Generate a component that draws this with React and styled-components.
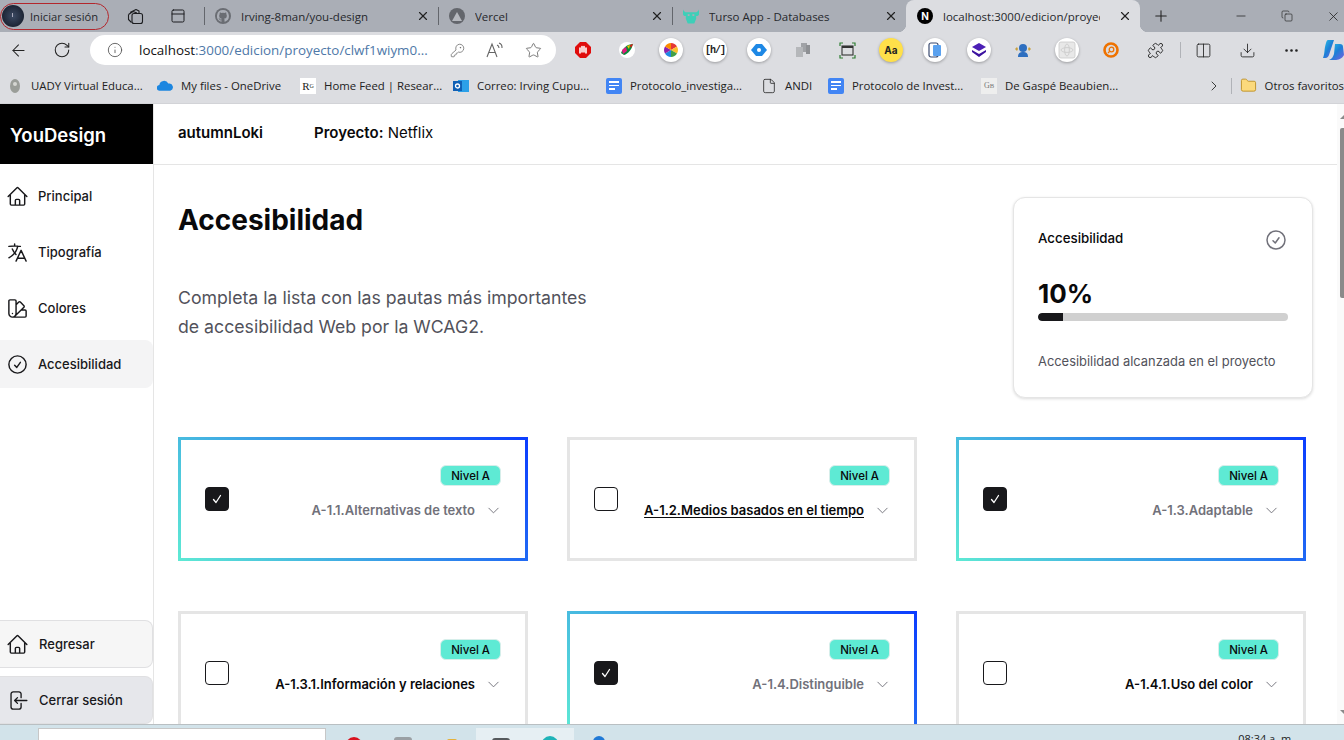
import React from "react";
import styled, { createGlobalStyle } from "styled-components";
import { HiOutlineHome, HiOutlineLanguage, HiOutlineSwatch, HiOutlineCheckCircle, HiOutlineChevronDown } from "react-icons/hi2";
import { ArrowLeft, RotateCw, Info, KeyRound, Star, X, Plus, Minus, Copy, ChevronRight, Download, MoreHorizontal, Puzzle, Columns2, File, Folder, PanelTop } from "lucide-react";

const Global = createGlobalStyle`
  html, body { margin: 0; padding: 0; width: 1344px; height: 740px; overflow: hidden; background: #fff; }
  body { font-family: Inter, "Liberation Sans", sans-serif; color: #09090b; }
  * { box-sizing: border-box; }
`;

const Screen = styled.div`display: flex; flex-direction: column; width: 1344px; height: 740px; overflow: hidden;`;

const TabBar = styled.div`display: flex; align-items: center; height: 32px; flex: none; background: #aaaeb6; font-family: "Open Sans", "Noto Sans", sans-serif; font-size: 11.5px; color: #26282c;`;
const Profile = styled.div`display: flex; align-items: center; gap: 6px; width: 109px; height: 27px; padding-left: 1px; border: 1px solid #b3272d; border-radius: 14px; flex: none; white-space: nowrap; font-size: 11.2px;`;
const Avatar = styled.span`
  width: 22px; height: 22px; border-radius: 50%; background: radial-gradient(circle at 50% 50%, #3c4a63, #0e1420); flex: none; position: relative;
  &::after { content: ""; position: absolute; left: 10px; top: 8px; width: 1px; height: 4px; background: #aab; }
`;
const TabTools = styled.div`display: flex; align-items: center; flex: none; width: 95px; padding-left: 18px; gap: 26px; color: #1c1d20;`;
const Tab = styled.div`
  display: flex; align-items: center; flex: none; height: 32px; width: 234px; padding-left: 11px; gap: 10px; white-space: nowrap; position: relative;
  &::before { content: ""; position: absolute; left: 0; top: 7px; width: 1px; height: 18px; background: #63666c; }
`;
const ActiveTab = styled.div`
  display: flex; align-items: center; flex: none; width: 234px; height: 32px; padding-left: 11px; gap: 10px; background: #dcdde1; border-radius: 8px 8px 0 0; white-space: nowrap; position: relative;
  &::before, &::after { content: ""; position: absolute; bottom: 0; width: 8px; height: 8px; background: radial-gradient(circle at 0 0, transparent 8px, #dcdde1 8.5px); }
  &::before { left: -8px; }
  &::after { right: -8px; transform: scaleX(-1); }
`;
const TabTitle = styled.span`flex: 1; min-width: 0; overflow: hidden;`;
const TabClose = styled.span`display: flex; flex: none; width: 30px; justify-content: center; color: #222;`;
const NextBadge = styled.span`width: 16px; height: 16px; border-radius: 50%; background: #000; color: #fff; font-size: 10px; font-weight: 700; display: flex; align-items: center; justify-content: center; flex: none; font-family: Inter, sans-serif;`;
const NewTab = styled.div`display: flex; flex: none; width: 41px; padding-left: 12px; color: #222;`;
const WindowControls = styled.div`display: flex; flex: 1; justify-content: flex-end; align-items: center; gap: 33px; padding-right: 3px; color: #222;`;

const ToolBar = styled.div`display: flex; align-items: center; height: 36px; flex: none; background: #dcdde1; padding-left: 9px; color: #222;`;
const NavBtn = styled.span`display: flex; flex: none; width: ${p => p.$w}px;`;
const Omnibox = styled.div`display: flex; align-items: center; width: 466px; height: 30px; padding: 0 14px 0 17px; flex: none; background: #fff; border-radius: 15px; font-family: "Open Sans", "Noto Sans", sans-serif; font-size: 13.4px; color: #4e78a8;`;
const Host = styled.span`color: #111;`;
const Url = styled.span`flex: 1; margin-left: 16px; white-space: nowrap; overflow: hidden;`;
const OmniIcons = styled.div`display: flex; gap: 21px; align-items: center; color: #666;`;
const Ext = styled.div`display: flex; align-items: center; margin-left: 5px; flex: none;`;
const ExtSlot = styled.span`display: flex; align-items: center; justify-content: center; width: 44px; height: 28px; flex: none;`;
const ExtCircle = styled.span`display: flex; align-items: center; justify-content: center; width: 24px; height: 24px; border-radius: 50%; background: ${p => p.$bg ?? "#fff"}; box-shadow: 0 1px 3px rgba(0,0,0,.3); font-size: 10px; font-weight: 700; color: #222; overflow: hidden;`;
const MonoMark = styled.span`font-family: "Liberation Mono", monospace; font-size: 10px; font-weight: 700; letter-spacing: -1px;`;
const Divider = styled.span`width: 1px; height: 16px; background: #b0b2b7; flex: none; margin-left: ${p => p.$ml ?? 0}px;`;
const RightTools = styled.div`display: flex; align-items: center; flex: none; color: #222;`;
const Copilot = styled.span`display: flex; width: 22px; margin-left: 9px; flex: none;`;

const BookmarkBar = styled.div`display: flex; align-items: center; height: 36px; flex: none; background: #dcdde1; font-family: "Open Sans", "Noto Sans", sans-serif; font-size: 11.4px; color: #222; padding-left: 7px; white-space: nowrap; border-bottom: 1px solid #d2d3d7;`;
const Bookmark = styled.span`display: flex; align-items: center; gap: 8px; flex: none; width: ${p => p.$w}px;`;
const BookmarkEnd = styled.div`display: flex; align-items: center; flex: 1; justify-content: flex-end; gap: 8px; overflow: hidden;`;
const FavIcon = styled.span`display: flex; flex: none; width: 16px; height: 16px; align-items: center; justify-content: center;`;
const GDoc = styled.span`display: flex; flex-direction: column; justify-content: center; gap: 2px; padding: 0 3px; width: 16px; height: 16px; border-radius: 2px; background: #4285f4; flex: none;`;
const GDocLine = styled.i`display: block; height: 1.5px; background: #fff; width: ${p => p.$w ?? 100}%;`;
const SmallLogo = styled.span`width: 16px; height: 16px; background: ${p => p.$bg ?? "#fff"}; font-family: "Liberation Serif", serif; font-size: ${p => p.$s ?? 11}px; display: flex; align-items: center; justify-content: center; color: ${p => p.$c ?? "#222"}; flex: none;`;
const TinySup = styled.sup`font-size: 6px;`;

const Page = styled.div`display: flex; flex: 1; min-height: 0; background: #fff; position: relative;`;
const Sidebar = styled.aside`display: flex; flex-direction: column; width: 154px; flex: none; border-right: 1px solid #e5e5e5;`;
const Brand = styled.div`display: flex; align-items: center; height: 60px; width: 153px; padding: 2px 0 0 10px; flex: none; background: #000; color: #fff; font-size: 18.5px; font-weight: 600;`;
const Nav = styled.nav`display: flex; flex-direction: column; gap: 8px; padding-top: 8px; flex: 1;`;
const NavItem = styled.div`display: flex; align-items: center; gap: 9px; height: 48px; padding-left: 6px; font-size: 13px; font-weight: 500; color: #18181b; border-radius: 0 8px 8px 0; background: ${p => (p.$active ? "#f4f4f5" : "transparent")};`;
const SideFoot = styled.div`display: flex; flex-direction: column; gap: 8px; flex: none;`;
const FootBtn = styled.div`display: flex; align-items: center; gap: 10px; height: 48px; padding-left: 6px; font-size: 13px; font-weight: 500; color: #18181b; border: 1px solid #e0e0e2; border-left: none; border-radius: 0 8px 8px 0; background: ${p => p.$bg};`;

const Main = styled.main`flex: 1; min-width: 0; display: flex; flex-direction: column; overflow: hidden;`;
const Header = styled.header`display: flex; align-items: center; gap: 51px; height: 61px; flex: none; padding: 0 0 4px 24px; border-bottom: 1px solid #e5e5e5; font-size: 15px;`;
const UserName = styled.span`font-weight: 600;`;
const ProjectLabel = styled.span`font-weight: 600;`;
const Content = styled.div`flex: 1; padding: 32px 31px 0 24px; overflow: hidden;`;
const Intro = styled.div`display: flex; justify-content: space-between; align-items: flex-start;`;
const Title = styled.h1`margin: 5px 0 0; font-size: 28px; line-height: 36px; font-weight: 700; color: #09090b;`;
const Lead = styled.p`margin: 45px 0 0; font-size: 17.7px; line-height: 29px; font-weight: 400; color: #52525b; width: 420px;`;
const StatCard = styled.section`width: 300px; height: 201px; padding: 30px 24px 0; flex: none; background: #fff; border: 1px solid #e5e5e5; border-radius: 12px; box-shadow: 0 1px 3px rgba(0,0,0,.14);`;
const StatHead = styled.div`display: flex; justify-content: space-between; align-items: flex-start; font-size: 13.3px; font-weight: 500; line-height: 20px; color: #09090b;`;
const StatIcon = styled.span`display: flex; color: #71717a;`;
const Percent = styled.div`margin-top: 26px; font-size: 26px; line-height: 32px; font-weight: 700;`;
const Track = styled.div`height: 8px; margin-top: 3px; border-radius: 4px; background: #d0d0d0; overflow: hidden;`;
const Fill = styled.div`height: 100%; background: #18181b; border-radius: 4px 0 0 4px;`;
const StatNote = styled.p`margin: 33px 0 0; font-size: 12.9px; line-height: 16px; color: #52525b;`;

const Grid = styled.div`display: grid; grid-template-columns: repeat(3, 350px); column-gap: 39px; row-gap: 50px; margin-top: 39px;`;
const Card = styled.article`
  display: flex; align-items: center; justify-content: space-between; height: 124px; padding: 0 24px;
  border: 3px solid transparent;
  background: ${p => p.$on
    ? "linear-gradient(#fff, #fff) padding-box, linear-gradient(45deg, #5eead4, #0b3cff) border-box"
    : "linear-gradient(#fff, #fff) padding-box, linear-gradient(#e5e5e5, #e5e5e5) border-box"};
`;
const Box = styled.span`display: flex; align-items: center; justify-content: center; width: 24px; height: 24px; flex: none; border-radius: 4px; border: 1px solid #18181b; background: ${p => (p.$on ? "#18181b" : "#fff")}; color: #fff;`;
const CardSide = styled.div`display: flex; flex-direction: column; align-items: flex-end; gap: 14px; margin-bottom: 13px;`;
const Badge = styled.span`display: flex; align-items: center; height: 21px; padding: 0 10px; border-radius: 6px; background: #5eead4; font-size: 11.5px; font-weight: 500; color: #09090b; border: 1px solid #d6eeea;`;
const Rule = styled.div`display: flex; align-items: center; gap: 11px; font-size: 13px; font-weight: 600; line-height: 20px;`;
const RuleText = styled.span`color: ${p => (p.$on ? "#71717a" : "#09090b")}; text-decoration: ${p => (p.$u ? "underline" : "none")}; text-underline-offset: 2px;`;
const Chevron = styled.span`display: flex; color: #71717a; width: 15px;`;

const Scrollbar = styled.div`position: absolute; top: 0; right: 0; bottom: 0; width: 7px; background: #fafafa;`;
const Thumb = styled.div`position: absolute; top: 24px; left: 3px; right: 0; height: 170px; background: #8a8a8a; border-radius: 2px 0 0 2px;`;
const ArrowUp = styled.span`position: absolute; top: 11px; right: 0; border-left: 4px solid transparent; border-bottom: 4px solid #8a8a8a;`;
const ArrowDown = styled.span`position: absolute; bottom: 10px; right: 0; border-left: 4px solid transparent; border-top: 4px solid #8a8a8a;`;

const Taskbar = styled.footer`display: flex; align-items: flex-start; height: 16px; flex: none; background: #d2e3ea; border-top: 1px solid #b9bfc2; overflow: hidden;`;
const SearchBox = styled.div`width: 288px; height: 20px; margin: 3px 0 0 38px; background: #fff; border: 1px solid #c7c7c7; flex: none;`;
const TaskIcons = styled.div`display: flex; align-items: flex-start; margin-left: 3px; flex: none;`;
const TaskSlot = styled.span`display: flex; justify-content: center; width: 49px; height: 20px; margin-top: 3px; padding-top: ${p => p.$top}px; background: ${p => p.$bg ?? "transparent"};`;
const TaskDot = styled.span`width: ${p => p.$s ?? 18}px; height: 20px; flex: none; border-radius: ${p => p.$r ?? "50%"}; background: ${p => p.$c};`;
const Clock = styled.span`margin-left: auto; margin-right: 50px; margin-top: 7px; font-family: "Open Sans", sans-serif; font-size: 11px; line-height: 14px; color: #222; white-space: nowrap;`;

const TabIconCircle = styled.span`display: flex; align-items: center; justify-content: center; width: 16px; height: 16px; border-radius: 50%; background: ${p => p.$bg}; flex: none;`;

const items = [
  ["A-1.1.Alternativas de texto", true],
  ["A-1.2.Medios basados en el tiempo", false, true],
  ["A-1.3.Adaptable", true],
  ["A-1.3.1.Información y relaciones", false],
  ["A-1.4.Distinguible", true],
  ["A-1.4.1.Uso del color", false],
];

const LogoutIcon = () => (
  <svg width="23" height="23" viewBox="0 0 24 24" fill="none" stroke="currentColor" strokeWidth="1.400" strokeLinecap="round" strokeLinejoin="round">
    <path d="M15.750 9V5.250A2.250 2.250 0 0 0 13.500 3h-6a2.250 2.250 0 0 0-2.250 2.250v13.500A2.250 2.250 0 0 0 7.500 21h6a2.250 2.250 0 0 0 2.250-2.250V15M12 9l-3 3m0 0 3 3m-3-3h12.750" />
  </svg>
);

const CollectionsIcon = () => (
  <svg width="17" height="17" viewBox="0 0 17 17" fill="none" stroke="currentColor" strokeWidth="1.100" strokeLinejoin="round">
    <path d="M3 4.500l6-3 3 1.500v2" />
    <path d="M1.500 6.500L6 3.500 10 5" />
    <path d="M1.500 6.500v5l3 3" />
    <rect x="5" y="5.500" width="10.500" height="10" rx="2" />
  </svg>
);

const CheckMark = () => (
  <svg width="10" height="10" viewBox="0 0 10 10" fill="none" stroke="currentColor" strokeWidth="1.300" strokeLinecap="round" strokeLinejoin="round">
    <path d="M1.500 5.500L4 8.500 8.500 1.500" />
  </svg>
);

export default function App() {
  return (
    <Screen>
      <Global />
      <TabBar>
        <Profile><Avatar />Iniciar sesión</Profile>
        <TabTools>
          <CollectionsIcon />
          <PanelTop size={16} strokeWidth={1.5} />
        </TabTools>
        <Tab>
          <TabIconCircle $bg="#6a6d73">
            <svg width="12" height="12" viewBox="0 0 16 16" fill="#aaaeb6"><path d="M8 0a8 8 0 0 0-2.500 15.600c.4.1.5-.2.5-.4v-1.400c-2.200.5-2.700-1-2.700-1-.4-.9-.9-1.200-.9-1.200-.7-.5.1-.5.1-.5.8.1 1.200.8 1.200.8.7 1.200 1.900.9 2.300.7.1-.5.3-.9.5-1.100-1.800-.2-3.600-.9-3.600-4 0-.9.3-1.600.8-2.100-.1-.2-.4-1 .1-2.100 0 0 .7-.2 2.200.8a7.600 7.600 0 0 1 4 0c1.500-1 2.200-.8 2.200-.8.4 1.100.2 1.900.1 2.100.5.6.8 1.300.8 2.100 0 3.100-1.900 3.700-3.700 3.900.3.3.6.8.6 1.500v2.200c0 .2.1.5.6.4A8 8 0 0 0 8 0z" /></svg>
          </TabIconCircle>
          <TabTitle>Irving-8man/you-design</TabTitle>
          <TabClose><X size={14} /></TabClose>
        </Tab>
        <Tab>
          <TabIconCircle $bg="#63666c">
            <svg width="10" height="9" viewBox="0 0 10 9" fill="#b5b8be"><path d="M5 0l5 9H0z" /></svg>
          </TabIconCircle>
          <TabTitle>Vercel</TabTitle>
          <TabClose><X size={14} /></TabClose>
        </Tab>
        <Tab>
          <FavIcon>
            <svg width="17" height="15" viewBox="0 0 17 15" fill="#3ecfb8"><path d="M0 0c1 2 2 3 4 3h9c2 0 3-1 4-3v5c0 1-1 2-3 2v3l-2 5H5l-2-5V7C1 7 0 6 0 5z" /><rect x="5" y="5" width="2" height="2" fill="#aaaeb6" /><rect x="10" y="5" width="2" height="2" fill="#aaaeb6" /></svg>
          </FavIcon>
          <TabTitle>Turso App - Databases</TabTitle>
          <TabClose><X size={14} /></TabClose>
        </Tab>
        <ActiveTab>
          <NextBadge>N</NextBadge>
          <TabTitle>localhost:3000/edicion/proyecto</TabTitle>
          <TabClose><X size={14} /></TabClose>
        </ActiveTab>
        <NewTab><Plus size={18} strokeWidth={1.4} /></NewTab>
        <WindowControls>
          <Minus size={14} strokeWidth={1.3} />
          <Copy size={12} strokeWidth={1.3} />
          <X size={15} strokeWidth={1.3} />
        </WindowControls>
      </TabBar>

      <ToolBar>
        <NavBtn $w={44}><ArrowLeft size={19} strokeWidth={1.3} /></NavBtn>
        <NavBtn $w={37}><RotateCw size={18} strokeWidth={1.4} /></NavBtn>
        <Omnibox>
          <Info size={16} strokeWidth={1.3} color="#555" />
          <Url><Host>localhost</Host>:3000/edicion/proyecto/clwf1wiym0...</Url>
          <OmniIcons>
            <KeyRound size={15} strokeWidth={1.2} />
            <svg width="18" height="16" viewBox="0 0 18 16" fill="none" stroke="#666" strokeWidth="1.100"><path d="M1 15L6 2l5 13M3 10.500h6M11 3c1.500.5 2 1.500 2 3M13 1c2 .7 3.200 2.500 3 5" /></svg>
            <Star size={17} strokeWidth={1.2} />
          </OmniIcons>
        </Omnibox>
        <Ext>
          <ExtSlot>
            <svg width="16" height="16" viewBox="0 0 16 16"><path d="M5 0h6l5 5v6l-5 5H5l-5-5V5z" fill="#e00c0c" /><path d="M5 11V6M7 10V4.500M9 10V4.500M11 11V6" stroke="#fff" strokeWidth="1.600" strokeLinecap="round" /></svg>
          </ExtSlot>
          <ExtSlot>
            <svg width="16" height="16" viewBox="0 0 16 16"><circle cx="8" cy="8" r="8" fill="#fff" /><path d="M2 11c2-5 6-9 12-9-1 5-5 10-9 11z" fill="#0a8a3a" /><path d="M3 8l4-3 1 4-4 3z" fill="#e6197f" /><path d="M8 4l3-1-1 4z" fill="#f7c600" /><path d="M11 3l3-1-2 4z" fill="#e11" /></svg>
          </ExtSlot>
          <ExtSlot>
            <ExtCircle>
              <svg width="16" height="16" viewBox="0 0 16 16"><path d="M8 1a7 7 0 0 1 6 3.500L8 8z" fill="#e53935" /><path d="M14 4.500a7 7 0 0 1 0 7L8 8z" fill="#fbc02d" /><path d="M14 11.500a7 7 0 0 1-6 3.500V8z" fill="#43a047" /><path d="M8 15a7 7 0 0 1-6-3.500L8 8z" fill="#1e88e5" /><path d="M2 11.500a7 7 0 0 1 0-7L8 8z" fill="#8e24aa" /><path d="M2 4.500A7 7 0 0 1 8 1v7z" fill="#fb8c00" /></svg>
            </ExtCircle>
          </ExtSlot>
          <ExtSlot><ExtCircle><MonoMark>[h/]</MonoMark></ExtCircle></ExtSlot>
          <ExtSlot>
            <ExtCircle>
              <svg width="16" height="12" viewBox="0 0 16 12"><path d="M5 0h6l5 6-5 6H5L0 6z" fill="#1e88e5" /><circle cx="8" cy="6" r="2" fill="#fff" /></svg>
            </ExtCircle>
          </ExtSlot>
          <ExtSlot>
            <svg width="16" height="16" viewBox="0 0 16 16" fill="#a0a2a6"><rect x="6" y="1" width="6" height="9" /><rect x="11" y="3" width="4" height="9" fill="#8e9094" /><rect x="1" y="5" width="7" height="10" fill="#b5b7ba" /></svg>
          </ExtSlot>
          <ExtSlot>
            <svg width="17" height="17" viewBox="0 0 17 17" fill="none"><path d="M1 4V1h3M13 1h3v3M16 13v3h-3M4 16H1v-3" stroke="#2e7d32" strokeWidth="1.200" /><rect x="3" y="4" width="11" height="9" stroke="#333" strokeWidth="1.100" /><rect x="3" y="4" width="11" height="2" fill="#333" /></svg>
          </ExtSlot>
          <ExtSlot><ExtCircle $bg="#ffe04a">Aa</ExtCircle></ExtSlot>
          <ExtSlot>
            <ExtCircle>
              <svg width="16" height="16" viewBox="0 0 16 16"><rect x="2" y="1" width="9" height="14" rx="2" fill="none" stroke="#3a4a70" strokeWidth="1.200" /><rect x="6" y="3" width="8" height="11" rx="1" fill="#5aa1ef" /></svg>
            </ExtCircle>
          </ExtSlot>
          <ExtSlot>
            <ExtCircle>
              <svg width="16" height="16" viewBox="0 0 16 16"><path d="M8 1l7 4-7 4-7-4z" fill="#4b1fb5" /><path d="M1 8l7 4 7-4v2l-7 5-7-5z" fill="#3c12a0" /></svg>
            </ExtCircle>
          </ExtSlot>
          <ExtSlot>
            <svg width="16" height="16" viewBox="0 0 16 16"><circle cx="8" cy="6" r="4" fill="#2e6fc0" /><path d="M3 15c0-4 2-5 5-5s5 1 5 5z" fill="#2e6fc0" /><path d="M0 7l2-2 1 2-1 2zM16 7l-2-2-1 2 1 2z" fill="#c8a03c" /></svg>
          </ExtSlot>
          <ExtSlot>
            <ExtCircle>
              <svg width="18" height="18" viewBox="0 0 18 18" fill="#e8e8e8" stroke="#c9c9c9" strokeWidth=".8"><rect x="1" y="1" width="16" height="16" rx="2" /><ellipse cx="9" cy="9" rx="6" ry="2.400" fill="none" /><ellipse cx="9" cy="9" rx="2.400" ry="6" fill="none" /></svg>
            </ExtCircle>
          </ExtSlot>
          <ExtSlot>
            <svg width="16" height="16" viewBox="0 0 16 16" fill="none"><circle cx="8" cy="8" r="6.500" stroke="#ee7200" strokeWidth="2.600" /><circle cx="8.500" cy="7.500" r="2.300" stroke="#ee7200" strokeWidth="1.300" /><path d="M6.500 9.500L5 11" stroke="#ee7200" strokeWidth="1.300" /></svg>
          </ExtSlot>
        </Ext>
        <RightTools>
          <ExtSlot><Puzzle size={17} strokeWidth={1.3} /></ExtSlot>
          <Divider $ml={3} />
          <ExtSlot><Columns2 size={17} strokeWidth={1.2} /></ExtSlot>
          <ExtSlot><Download size={17} strokeWidth={1.2} /></ExtSlot>
          <ExtSlot><MoreHorizontal size={17} strokeWidth={1.8} /></ExtSlot>
          <Copilot>
            <svg width="22" height="22" viewBox="0 0 22 22"><defs><linearGradient id="cp" x1="0" y1="0" x2="1" y2="1"><stop offset="0" stopColor="#2bc4e8" /><stop offset=".5" stopColor="#1c7fd6" /><stop offset="1" stopColor="#7a5fe0" /></linearGradient></defs><path d="M6 1h6l-5 15c-.5 1.500-1.500 3-3.500 3H1C3 14 2 10 4 4c.4-1.500 1-3 2-3z" fill="url(#cp)" /><path d="M13 5l5 0c2 0 3 1 3 3l1 8c-2 4-6 5-9 5H7c3-1 4-3 5-6z" fill="url(#cp)" /></svg>
          </Copilot>
        </RightTools>
      </ToolBar>

      <BookmarkBar>
        <Bookmark $w={150}><FavIcon><svg width="12" height="16" viewBox="0 0 12 16"><ellipse cx="6" cy="8" rx="5" ry="7" fill="#9a9d98" /><circle cx="6" cy="6" r="2" fill="#d5d6d2" /></svg></FavIcon>UADY Virtual Educa...</Bookmark>
        <Bookmark $w={143}><FavIcon><svg width="17" height="11" viewBox="0 0 17 11"><path d="M3 11a3 3 0 0 1-.5-6A5 5 0 0 1 12 3.500 3.800 3.800 0 0 1 14 11z" fill="#1c86e0" /></svg></FavIcon>My files - OneDrive</Bookmark>
        <Bookmark $w={153}><SmallLogo>R<TinySup>G</TinySup></SmallLogo>Home Feed | Resear...</Bookmark>
        <Bookmark $w={153}><FavIcon><svg width="16" height="16" viewBox="0 0 16 16"><rect x="5" y="2" width="11" height="12" fill="#2ba0e8" /><rect y="3" width="9" height="10" fill="#0f60b5" /><circle cx="4.500" cy="8" r="2" fill="none" stroke="#fff" strokeWidth="1.300" /></svg></FavIcon>Correo: Irving Cupu...</Bookmark>
        <Bookmark $w={155}><GDoc><GDocLine /><GDocLine /><GDocLine $w={60} /></GDoc>Protocolo_investiga...</Bookmark>
        <Bookmark $w={67}><FavIcon><File size={16} strokeWidth={1.2} /></FavIcon>ANDI</Bookmark>
        <Bookmark $w={153}><GDoc><GDocLine /><GDocLine /><GDocLine $w={60} /></GDoc>Protocolo de Invest...</Bookmark>
        <Bookmark $w={140}><SmallLogo $bg="#eee" $s={8} $c="#777">G<sub>B</sub></SmallLogo>De Gaspé Beaubien...</Bookmark>
        <BookmarkEnd>
          <ChevronRight size={16} strokeWidth={1.3} />
          <Divider $ml={1} />
          <Folder size={17} strokeWidth={1.2} fill="#fbd97c" color="#b98a1c" />
          <span>Otros favoritos</span>
        </BookmarkEnd>
      </BookmarkBar>

      <Page>
        <Sidebar>
          <Brand>YouDesign</Brand>
          <Nav>
            <NavItem><HiOutlineHome size={23} />Principal</NavItem>
            <NavItem><HiOutlineLanguage size={23} />Tipografía</NavItem>
            <NavItem><HiOutlineSwatch size={23} />Colores</NavItem>
            <NavItem $active><HiOutlineCheckCircle size={23} />Accesibilidad</NavItem>
          </Nav>
          <SideFoot>
            <FootBtn $bg="#f6f6f6"><HiOutlineHome size={23} />Regresar</FootBtn>
            <FootBtn $bg="#e6e7eb"><LogoutIcon />Cerrar sesión</FootBtn>
          </SideFoot>
        </Sidebar>
        <Main>
          <Header>
            <UserName>autumnLoki</UserName>
            <span><ProjectLabel>Proyecto:</ProjectLabel> Netflix</span>
          </Header>
          <Content>
            <Intro>
              <div>
                <Title>Accesibilidad</Title>
                <Lead>Completa la lista con las pautas más importantes de accesibilidad Web por la WCAG2.</Lead>
              </div>
              <StatCard>
                <StatHead>Accesibilidad<StatIcon><HiOutlineCheckCircle size={24} /></StatIcon></StatHead>
                <Percent>10%</Percent>
                <Track><Fill style={{ width: "10%" }} /></Track>
                <StatNote>Accesibilidad alcanzada en el proyecto</StatNote>
              </StatCard>
            </Intro>
            <Grid>
              {items.map(([label, on, underlined]) => (
                <Card key={label} $on={on}>
                  <Box $on={on}>{on && <CheckMark />}</Box>
                  <CardSide>
                    <Badge>Nivel A</Badge>
                    <Rule>
                      <RuleText $on={on} $u={underlined}>{label}</RuleText>
                      <Chevron><HiOutlineChevronDown size={15} /></Chevron>
                    </Rule>
                  </CardSide>
                </Card>
              ))}
            </Grid>
          </Content>
        </Main>
        <Scrollbar><ArrowUp /><Thumb /><ArrowDown /></Scrollbar>
      </Page>

      <Taskbar>
        <SearchBox />
        <TaskIcons>
          <TaskSlot $top={9}><TaskDot $c="#d9121f" /></TaskSlot>
          <TaskSlot $top={9}><TaskDot $c="#9aa0a4" $r="3px" /></TaskSlot>
          <TaskSlot $top={11}><TaskDot $c="#e5b13a" $s={10} $r="2px" /></TaskSlot>
          <TaskSlot $top={10} $bg="#e6eff3"><TaskDot $c="#55595c" $r="3px" /></TaskSlot>
          <TaskSlot $top={8} $bg="#e6eff3"><TaskDot $c="#1fb3b8" /></TaskSlot>
          <TaskSlot $top={8}><TaskDot $c="#1f79d6" $s={12} $r="6px" /></TaskSlot>
        </TaskIcons>
        <Clock>08:34 a. m.</Clock>
      </Taskbar>
    </Screen>
  );
}
